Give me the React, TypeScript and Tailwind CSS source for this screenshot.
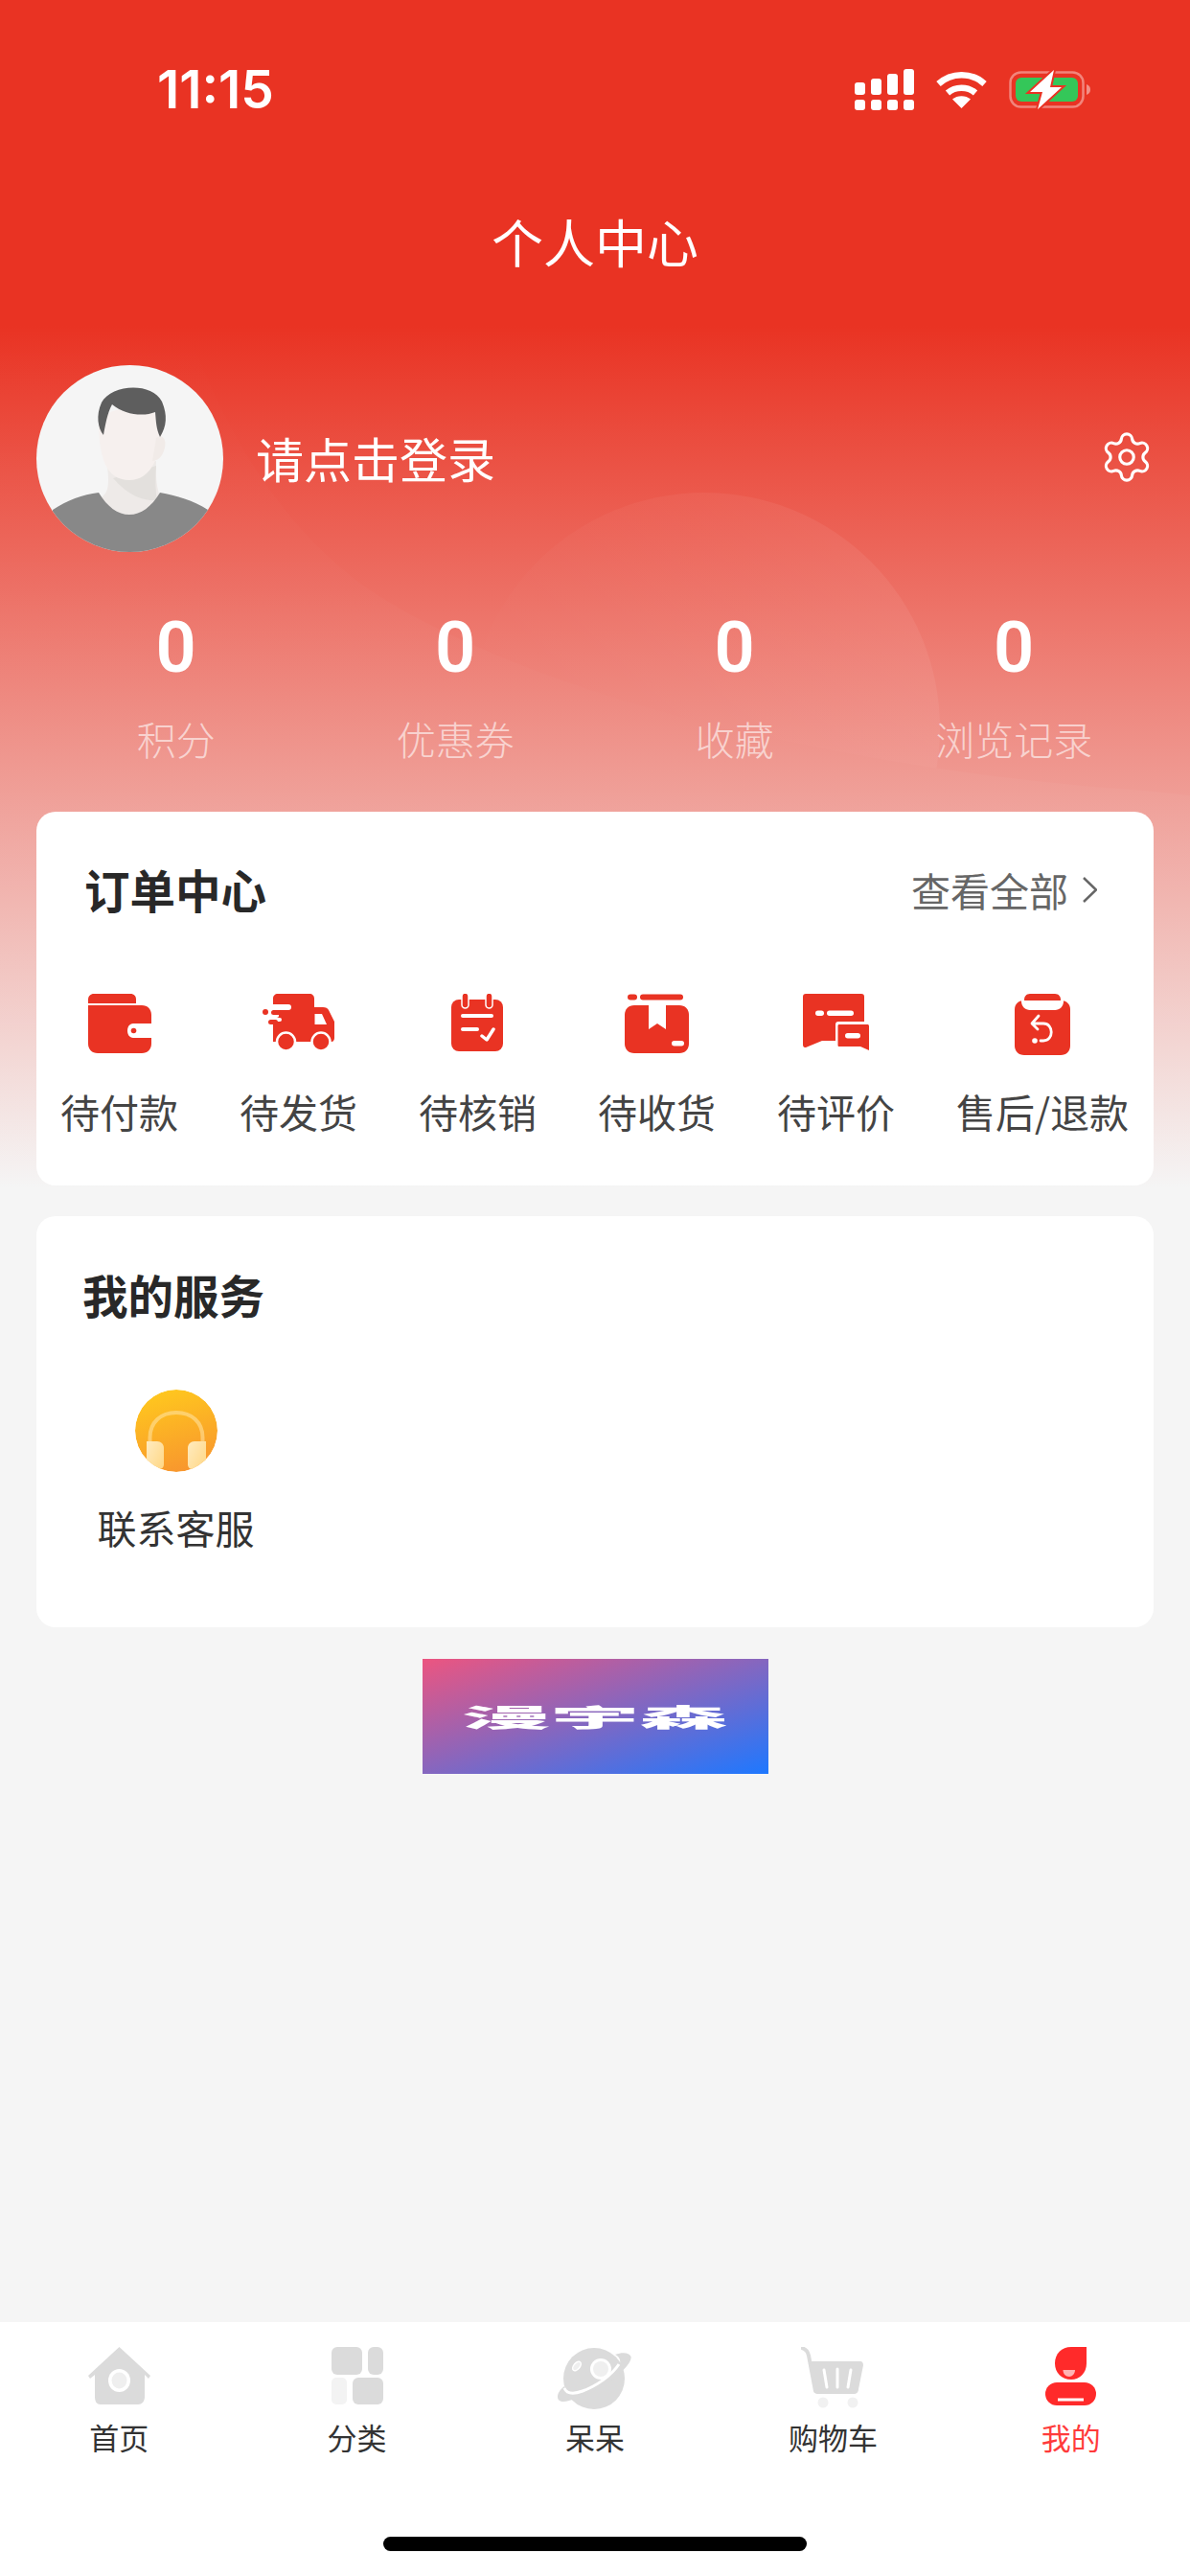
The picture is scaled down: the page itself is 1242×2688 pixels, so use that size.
import { Settings } from "lucide-react"

const cjk = "font-['Noto_Sans_CJK_SC','Noto_Sans',sans-serif]"

function SignalIcon() {
  return (
    <svg width="62" height="43" viewBox="0 0 62 43" fill="#fff">
      <rect x="0" y="14" width="11" height="13" rx="3" />
      <rect x="17" y="10" width="11" height="17" rx="3" />
      <rect x="34" y="5" width="11" height="22" rx="3" />
      <rect x="51" y="0" width="11" height="27" rx="3" />
      <rect x="0" y="32" width="11" height="11" rx="3" />
      <rect x="17" y="32" width="11" height="11" rx="3" />
      <rect x="34" y="32" width="11" height="11" rx="3" />
      <rect x="51" y="32" width="11" height="11" rx="3" />
    </svg>
  )
}

function WifiIcon() {
  return (
    <svg width="53" height="39" viewBox="0 0 53 39" fill="none" stroke="#fff" strokeWidth="6.5">
      <path d="M2.5 13.5C16 1 37 1 50.5 13.5" />
      <path d="M12 23C20 16 33 16 41 23" />
      <path d="M26.5 39L17 29.5C22 25 31 25 36 29.5Z" fill="#fff" stroke="none" />
    </svg>
  )
}

function BatteryIcon() {
  return (
    <svg width="86" height="43" viewBox="0 0 86 43" fill="none">
      <rect x="1.5" y="3.5" width="76" height="36" rx="11" stroke="#fff" strokeOpacity="0.4" strokeWidth="2.5" />
      <rect x="7" y="9" width="65" height="25" rx="6" fill="#34C759" />
      <path d="M81 16c3 1 4 3 4 5.500s-1 4.500-4 5.500Z" fill="#fff" fillOpacity="0.45" />
      <path d="M47 1L22 24H35L30 42L55 19H43L47 1Z" fill="#fff" stroke="#E93323" strokeWidth="4" paintOrder="stroke" />
    </svg>
  )
}

function Avatar() {
  return (
    <svg width="195" height="195" viewBox="0 0 195 195" className="shrink-0">
      <defs>
        <clipPath id="avatar-clip">
          <circle cx="97.500" cy="97.500" r="97.500" />
        </clipPath>
      </defs>
      <g clipPath="url(#avatar-clip)">
        <rect width="195" height="195" fill="#F5F5F5" />
        <path d="M74 105C76 125 76 135 64 140L97 165L130 140C126 130 124 118 125 100Z" fill="#EEEAE8" />
        <path d="M80 118C95 135 110 142 126 141C124 130 124 118 125 105Z" fill="#E3E0DD" />
        <path d="M65 58C65 95 72 120 97 120C120 120 130 95 132 58C120 40 80 40 65 58Z" fill="#F6F0EE" />
        <path d="M125 76C131 72 136 76 134 86C132 95 127 100 121 100Z" fill="#F1EBE8" />
        <path d="M70 73C64 66 62 52 68 39C78 20 120 17 131 38C137 52 136 64 129 75C125 66 125 60 124 49C112 54 92 52 79 41C74 50 72 62 70 73Z" fill="#5E5E5E" />
        <path d="M17 151C32 141 48 135 65 133C74 148 85 156 97 156C109 156 120 148 129 133C146 136 164 141 179 151L179 200L17 200Z" fill="#888888" />
      </g>
    </svg>
  )
}

function WalletIcon() {
  return (
    <svg width="66" height="62" viewBox="0 0 66 62">
      <path d="M0 10V6C0 2.500 2.500 0 6 0H44C48 0 50 2.500 50 6V10Z" fill="#E93323" />
      <path d="M0 12H56C62 12 66 16 66 22V31H47C39 31 39 46 47 46H66V52C66 58 62 62 56 62H10C4 62 0 58 0 52Z" fill="#E93323" />
      <circle cx="47.500" cy="38.500" r="2.800" fill="#E93323" />
    </svg>
  )
}

function TruckIcon() {
  return (
    <svg width="75" height="60" viewBox="0 0 75 60">
      <path d="M11 50V5C11 2 13 0 16 0H49C52 0 54 2 54 5V14H63C66 14 68 15 69 17L75 29V46C75 48 74 50 72 50H11Z" fill="#E93323" />
      <path d="M54.500 21H62L67 32H54.500Z" fill="#fff" />
      <rect x="7" y="11" width="23" height="6" rx="3" fill="#fff" />
      <rect x="5" y="20" width="12" height="5" rx="2.500" fill="#fff" />
      <rect x="5" y="25" width="15" height="4" rx="2" fill="#fff" />
      <circle cx="3" cy="19" r="3" fill="#E93323" />
      <rect x="9" y="17" width="10" height="5" rx="2.500" fill="#E93323" />
      <rect x="6" y="27" width="10" height="5" rx="2.500" fill="#E93323" />
      <circle cx="24.500" cy="50" r="9.500" fill="#E93323" stroke="#fff" strokeWidth="2.500" />
      <circle cx="61" cy="50" r="9.500" fill="#E93323" stroke="#fff" strokeWidth="2.500" />
    </svg>
  )
}

function CalendarIcon() {
  return (
    <svg width="54" height="60" viewBox="0 0 54 60">
      <rect x="0" y="6" width="54" height="54" rx="8" fill="#E93323" />
      <rect x="11" y="-1" width="7" height="16" rx="3.500" fill="#E93323" stroke="#fff" strokeWidth="1.500" />
      <rect x="36" y="-1" width="7" height="16" rx="3.500" fill="#E93323" stroke="#fff" strokeWidth="1.500" />
      <rect x="10" y="21" width="34" height="4" rx="2" fill="#fff" />
      <rect x="10" y="35" width="19" height="4" rx="2" fill="#fff" />
      <path d="M32 44L37 48L44 37" fill="none" stroke="#fff" strokeWidth="3.500" strokeLinecap="round" strokeLinejoin="round" />
    </svg>
  )
}

function BoxIcon() {
  return (
    <svg width="67" height="62" viewBox="0 0 67 62">
      <rect x="3" y="0.500" width="10" height="6" rx="3" fill="#E93323" />
      <rect x="16" y="0.500" width="45" height="6" rx="3" fill="#E93323" />
      <path d="M10 12H57C63 12 67 16 67 22V52C67 58 63 62 57 62H10C4 62 0 58 0 52V22C0 16 4 12 10 12Z" fill="#E93323" />
      <path d="M25 11H43V37L34 31L25 37Z" fill="#fff" />
      <rect x="49" y="49" width="13" height="5.500" rx="2.750" fill="#fff" />
    </svg>
  )
}

function ChatIcon() {
  return (
    <svg width="69" height="60" viewBox="0 0 69 60">
      <path d="M3 0H61C63 0 64 1 64 3V49H20L3 56C1 56.500 0 55 0 53V3C0 1 1 0 3 0Z" fill="#E93323" />
      <rect x="13" y="17.500" width="9" height="5.500" rx="2.750" fill="#fff" />
      <rect x="25" y="17.500" width="28" height="5.500" rx="2.750" fill="#fff" />
      <path d="M37 29H66C68 29 69 30 69 32V60L60 56H37C35 56 34 55 34 53V32C34 30 35 29 37 29Z" fill="#fff" />
      <path d="M38 32H67C68.500 32 69 32.500 69 34V59L60 55H38C37 55 36.500 54.500 36.500 53.500V33.500C36.500 32.500 37 32 38 32Z" fill="#E93323" />
      <rect x="44" y="41" width="16" height="5.500" rx="2.750" fill="#fff" />
    </svg>
  )
}

function ReturnIcon() {
  return (
    <svg width="58" height="64" viewBox="0 0 58 64">
      <path d="M9 7H49C54 7 58 11 58 16V54C58 60 54 64 48 64H10C4 64 0 60 0 54V16C0 11 4 7 9 7Z" fill="#E93323" />
      <path d="M7 -1H51V8C51 13 47 17 42 17H16C11 17 7 13 7 8Z" fill="#fff" />
      <path d="M16 0H42C46 0 48 3 48 6C48 6.500 48 7 47.500 7H10.500C10 7 10 6.500 10 6C10 3 12 0 16 0Z" fill="#E93323" />
      <path d="M25 23L18 31L24 37M19 31H30C41 31 41 49 30 49H27" fill="none" stroke="#fff" strokeWidth="2.800" strokeLinecap="round" strokeLinejoin="round" />
      <circle cx="21" cy="49" r="2.800" fill="#fff" />
    </svg>
  )
}

function HeadsetIcon() {
  return (
    <svg width="86" height="86" viewBox="0 0 86 86">
      <defs>
        <linearGradient id="headset-bg" x1="0.300" y1="0" x2="0.600" y2="1">
          <stop offset="0" stopColor="#FFC81E" />
          <stop offset="1" stopColor="#F8962E" />
        </linearGradient>
        <linearGradient id="headset-pad" x1="0" y1="0" x2="1" y2="0.800">
          <stop offset="0" stopColor="#FFEBC0" />
          <stop offset="1" stopColor="#FFD98A" />
        </linearGradient>
        <clipPath id="headset-clip">
          <circle cx="43" cy="43" r="43" />
        </clipPath>
      </defs>
      <g clipPath="url(#headset-clip)">
        <circle cx="43" cy="43" r="43" fill="url(#headset-bg)" />
        <path d="M15.500 58V50C15.500 34 27 24 43 24C59 24 70.500 34 70.500 50V58" fill="none" stroke="#FFE6A8" strokeOpacity="0.55" strokeWidth="4" />
        <path d="M12 54H23C27 54 30 57 30 61V78C30 81 28 83 25 83L12 78Z" fill="url(#headset-pad)" />
        <path d="M74 54H62C58 54 55 57 55 61V78C55 81 57 83 60 83L74 78Z" fill="url(#headset-pad)" />
      </g>
    </svg>
  )
}

function HomeTab() {
  return (
    <svg width="65" height="60" viewBox="0 0 65 60">
      <path d="M32.500 0L65 30L63 33L59 29V52C59 57 56 60 52 60H13C9 60 7 57 7 52V29L2 33L0 30Z" fill="#DBDBDB" />
      <ellipse cx="32.500" cy="35" rx="11.500" ry="12" fill="#fff" />
      <ellipse cx="32.500" cy="35" rx="8" ry="8.500" fill="#EFEFEF" />
    </svg>
  )
}

function CategoryTab() {
  return (
    <svg width="54" height="60" viewBox="0 0 54 60">
      <rect x="0" y="0" width="32" height="29" rx="6" fill="#DBDBDB" />
      <rect x="38" y="0" width="16" height="29" rx="6" fill="#DBDBDB" />
      <rect x="0" y="32" width="16" height="28" rx="5" fill="#F3F3F3" />
      <rect x="22" y="32" width="32" height="28" rx="6" fill="#DBDBDB" />
    </svg>
  )
}

function PlanetTab() {
  return (
    <svg width="77" height="65" viewBox="0 0 77 65">
      <circle cx="38" cy="33" r="32" fill="#DBDBDB" />
      <path d="M60 8C68 5 75 6 76.500 10C77.500 14 72 22 62 30C48 42 26 52 12 56C5 58 0 57 0 52C0 48 3 44 7 41C8 48 14 50 22 47C38 43 56 28 65 17C66 13 64 10 60 8Z" fill="#DBDBDB" />
      <path d="M7 43C10 50 18 49 26 46C40 41 56 30 64 18" fill="none" stroke="#fff" strokeWidth="3" />
      <circle cx="45" cy="23" r="11" fill="#fff" />
      <circle cx="45" cy="23" r="8" fill="#EFEFEF" />
      <ellipse cx="20" cy="20" rx="3.200" ry="5.500" transform="rotate(40 20 20)" fill="#EFEFEF" stroke="#fff" strokeWidth="1.500" />
    </svg>
  )
}

function CartTab() {
  return (
    <svg width="66" height="64" viewBox="0 0 66 64">
      <path d="M1 1C6 3 7 5 8 9L15 46" fill="none" stroke="#DBDBDB" strokeWidth="4" strokeLinecap="round" />
      <path d="M9 15H62C64 15 65 17 65 19L60 44C60 47 58 49 55 49H17C15 49 14 48 14 46Z" fill="#DBDBDB" />
      <path d="M24 24L27 42M38 23V42M52 24L49 42" fill="none" stroke="#fff" strokeWidth="3" strokeLinecap="round" />
      <circle cx="23" cy="58" r="5.500" fill="#F1F1F1" />
      <circle cx="54" cy="58" r="5.500" fill="#F1F1F1" />
    </svg>
  )
}

function MeTab() {
  return (
    <svg width="53" height="61" viewBox="0 0 53 61">
      <path d="M27 0H43V17C43 27 36 34 27 34C17 34 10 27 10 17C10 7 17 0 27 0Z" fill="#FF2A2A" />
      <path d="M18.500 24H31C31 28 28 31 25 31C21 31 18.500 28 18.500 24Z" fill="#FFB3B3" />
      <rect x="0" y="37" width="53" height="24" rx="12" fill="#FF2A2A" />
      <rect x="13" y="53.500" width="27" height="3" fill="#fff" />
    </svg>
  )
}

const stats = [
  { value: "0", label: "积分" },
  { value: "0", label: "优惠券" },
  { value: "0", label: "收藏" },
  { value: "0", label: "浏览记录" },
]

const orderItems = [
  { label: "待付款", icon: <WalletIcon /> },
  { label: "待发货", icon: <TruckIcon /> },
  { label: "待核销", icon: <CalendarIcon /> },
  { label: "待收货", icon: <BoxIcon /> },
  { label: "待评价", icon: <ChatIcon /> },
  { label: "售后/退款", icon: <ReturnIcon /> },
]

const tabs = [
  { label: "首页", icon: <HomeTab /> },
  { label: "分类", icon: <CategoryTab /> },
  { label: "呆呆", icon: <PlanetTab /> },
  { label: "购物车", icon: <CartTab /> },
  { label: "我的", icon: <MeTab />, active: true },
]

export default function App() {
  return (
    <div className={`relative flex h-[2688px] w-full flex-col overflow-hidden bg-[#f5f5f5] ${cjk}`}>
      {/* header backdrop with the soft swoosh and circle */}
      <div className="absolute inset-x-0 top-0 h-[1240px] bg-[linear-gradient(180deg,#E93323_340px,#f5f5f5_1240px)]">
        <svg width="1242" height="1240" viewBox="0 0 1242 1240" fill="none">
          <defs>
            <clipPath id="above-swoosh">
              <path d="M192 329C230 450 300 560 394 621C470 670 620 730 777 764C850 780 1000 812 1194 825L1242 825L1242 0L192 0Z" />
            </clipPath>
            <linearGradient id="swoosh-fade" gradientUnits="userSpaceOnUse" x1="0" y1="330" x2="0" y2="830">
              <stop offset="0" stopColor="#fff" stopOpacity="0" />
              <stop offset="1" stopColor="#fff" stopOpacity="0.03" />
            </linearGradient>
            <linearGradient id="circle-fade" gradientUnits="userSpaceOnUse" x1="860" y1="540" x2="560" y2="780">
              <stop offset="0" stopColor="#fff" stopOpacity="0.06" />
              <stop offset="1" stopColor="#fff" stopOpacity="0" />
            </linearGradient>
          </defs>
          <path d="M192 329C230 450 300 560 394 621C470 670 620 730 777 764C850 780 1000 812 1194 825L1242 830L1242 1240L0 1240L0 329Z" fill="url(#swoosh-fade)" />
          <circle cx="735" cy="760" r="246" fill="url(#circle-fade)" clipPath="url(#above-swoosh)" />
        </svg>
      </div>

      <div className="relative flex flex-col">
        <div className="mt-[66px] flex h-[54px] items-center justify-between pl-[164px] pr-[103px]">
          <span className="font-['Inter',sans-serif] text-[55px] leading-[54px] font-semibold text-white">11:15</span>
          <div className="flex items-center gap-[23px]">
            <SignalIcon />
            <WifiIcon />
            <BatteryIcon />
          </div>
        </div>

        <h1 className="mt-[102px] h-[60px] text-center text-[54px] leading-[60px] font-normal text-white">个人中心</h1>

        <div className="mt-[99px] flex h-[195px] items-center pl-[38px] pr-[37px]">
          <Avatar />
          <span className="ml-[34px] text-[50px] leading-[60px] font-normal text-white -mt-[4px]">请点击登录</span>
          <Settings size={58} strokeWidth={1.3} color="#ffffff" className="ml-auto -mt-[4px]" />
        </div>

        <div className="mt-[64px] grid grid-cols-4 px-[38px]">
          {stats.map((stat) => (
            <div key={stat.label} className="flex flex-col items-center">
              <span className="font-['Roboto',sans-serif] text-[74px] leading-[72px] font-semibold text-white">{stat.value}</span>
              <span className="mt-[33px] text-[41px] leading-[50px] font-light whitespace-nowrap text-white/60">{stat.label}</span>
            </div>
          ))}
        </div>

        <section className="mx-[38px] mt-[52px] h-[390px] rounded-[20px] bg-white pt-[51px]">
          <div className="flex h-[60px] items-center justify-between pl-[50px] pr-[59px]">
            <h2 className="text-[47.500px] leading-[60px] font-bold text-[#282828]">订单中心</h2>
            <div className="flex items-center gap-[15px] text-[41px] leading-[50px] text-[#666666]">
              查看全部
              <svg width="15" height="27" viewBox="0 0 15 27" fill="none" stroke="#666666" strokeWidth="2.500">
                <path d="M1 1L14 13.500L1 26" />
              </svg>
            </div>
          </div>
          <div className="mt-[79px] flex justify-between pl-[25px] pr-[26px]">
            {orderItems.map((item) => (
              <div key={item.label} className="flex flex-col items-center">
                <div className="flex h-[64px] items-start justify-center">{item.icon}</div>
                <span className="mt-[33px] text-[41px] leading-[50px] whitespace-nowrap text-[#444444]">{item.label}</span>
              </div>
            ))}
          </div>
        </section>

        <section className="mx-[38px] mt-[32px] h-[429px] rounded-[20px] bg-white pt-[52px]">
          <h2 className="pl-[48px] text-[47.500px] leading-[60px] font-bold text-[#282828]">我的服务</h2>
          <div className="mt-[69px] ml-[65px] flex w-[161px] flex-col items-center">
            <HeadsetIcon />
            <span className="mt-[32px] text-[41px] leading-[50px] whitespace-nowrap text-[#333333]">联系客服</span>
          </div>
        </section>

        <div className="mx-auto mt-[33px] flex h-[120px] w-[361px] items-center justify-center bg-[linear-gradient(to_bottom_right,#EC5580,#1E78FF)]">
          <span className="scale-x-[3.550] text-[26px] leading-[30px] font-black text-white">漫宇森</span>
        </div>
      </div>

      <nav className="relative mt-auto flex h-[265px] flex-col bg-white pt-[26px]">
        <div className="grid grid-cols-5">
          {tabs.map((tab) => (
            <div key={tab.label} className="flex flex-col items-center">
              <div className="flex h-[64px] items-start justify-center">{tab.icon}</div>
              <span className={`mt-[10px] text-[31px] leading-[40px] ${tab.active ? "text-[#FF3B3B]" : "text-[#333333]"}`}>{tab.label}</span>
            </div>
          ))}
        </div>
        <div className="mx-auto mt-auto mb-[26px] h-[15px] w-[442px] rounded-full bg-black" />
      </nav>
    </div>
  )
}
